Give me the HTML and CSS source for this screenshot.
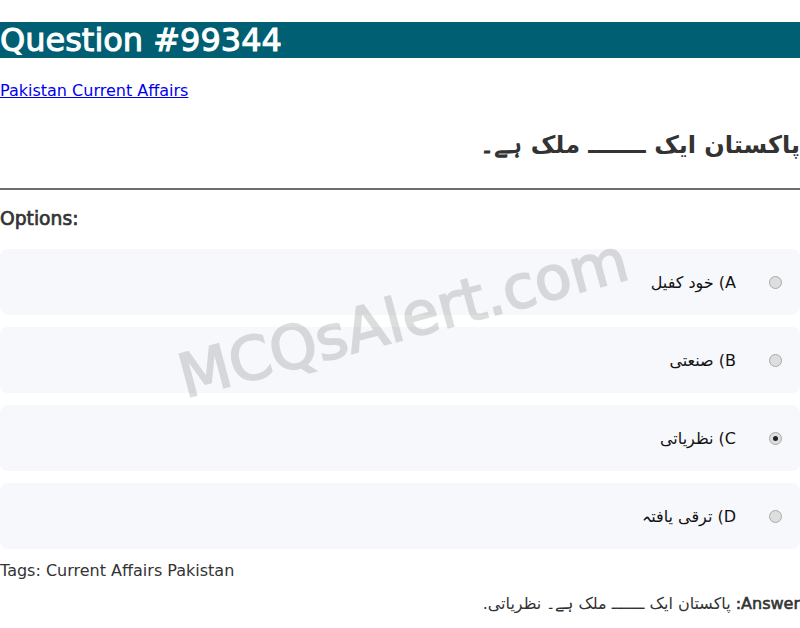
FILE: index.html
```html
<!DOCTYPE html>
<html lang="en">
<head>
<meta charset="utf-8">
<title>Question #99344</title>
<link rel="stylesheet" href="styles.css">
</head>
<body>
<div class="page">
  <h1 class="title">Question #99344</h1>
  <p class="category"><a href="#">Pakistan Current Affairs</a></p>
  <h2 class="question" dir="rtl">پاکستان ایک ـــــــ ملک ہے۔</h2>
  <hr class="divider">
  <h3 class="options-title">Options:</h3>
  <div class="options">
    <label class="option" dir="rtl"><span class="radio"></span><span class="opt-text">A) خود کفیل</span></label>
    <label class="option" dir="rtl"><span class="radio"></span><span class="opt-text">B) صنعتی</span></label>
    <label class="option" dir="rtl"><span class="radio checked"></span><span class="opt-text">C) نظریاتی</span></label>
    <label class="option" dir="rtl"><span class="radio"></span><span class="opt-text">D) ترقی یافتہ</span></label>
  </div>
  <p class="tags">Tags: Current Affairs Pakistan</p>
  <p class="answer" dir="rtl"><strong>Answer:</strong> پاکستان ایک ـــــــ ملک ہے۔ نظریاتی.</p>
  <div class="watermark">MCQsAlert.com</div>
</div>
</body>
</html>
```
FILE: styles.css
```css
html, body {
  margin: 0;
  padding: 0;
  background: #ffffff;
}
body {
  font-family: "DejaVu Sans", sans-serif;
  color: #333333;
}
.page {
  position: relative;
  width: 800px;
  overflow: hidden;
}
.title {
  margin: 22px 0 0;
  height: 36px;
  line-height: 36px;
  font-size: 32px;
  font-weight: 400;
  -webkit-text-stroke: 1px #ffffff;
  color: #ffffff;
  background: #005f73;
  white-space: nowrap;
}
.category {
  margin: 23px 0 0;
  font-size: 16px;
  line-height: 19px;
}
.category a {
  color: #0000ee;
  text-decoration: underline;
}
.question {
  margin: 31px 0 0;
  font-size: 24px;
  line-height: 28px;
  font-weight: 700;
  color: #333333;
  text-align: right;
}
.divider {
  margin: 29px 0 0;
  border: 0;
  height: 2px;
  background: #6e6e6e;
}
.options-title {
  margin: 18px 0 0;
  font-size: 18.72px;
  line-height: 22px;
  font-weight: 400;
  -webkit-text-stroke: 0.7px #333333;
  color: #333333;
}
.options {
  margin-top: 19px;
  display: flex;
  flex-direction: column;
  gap: 12px;
}
.option {
  display: flex;
  align-items: center;
  height: 66px;
  padding: 0 18px;
  border-radius: 8px;
  background: #f7f8fc;
}
.radio {
  width: 11px;
  height: 11px;
  border: 1px solid #a9a9a9;
  border-radius: 50%;
  background: #dedede;
  display: flex;
  align-items: center;
  justify-content: center;
  flex: none;
}
.radio.checked::after {
  content: "";
  width: 5px;
  height: 5px;
  border-radius: 50%;
  background: #222222;
}
.opt-text {
  margin-right: 33px;
  font-size: 16px;
  color: #111111;
}
.tags {
  margin: 13px 0 0;
  font-size: 16px;
  line-height: 18px;
  color: #333333;
}
.answer {
  margin: 15px 0 0;
  font-size: 16px;
  line-height: 18px;
  color: #333333;
}
.answer strong {
  font-weight: 400;
  -webkit-text-stroke: 0.6px #333333;
}
.watermark {
  position: absolute;
  left: 403px;
  top: 318px;
  transform: translate(-50%, -50%) rotate(-15deg);
  font-size: 60px;
  font-weight: 400;
  color: #000000;
  -webkit-text-stroke: 1.9px #000000;
  opacity: 0.13;
  white-space: nowrap;
  pointer-events: none;
}
```
